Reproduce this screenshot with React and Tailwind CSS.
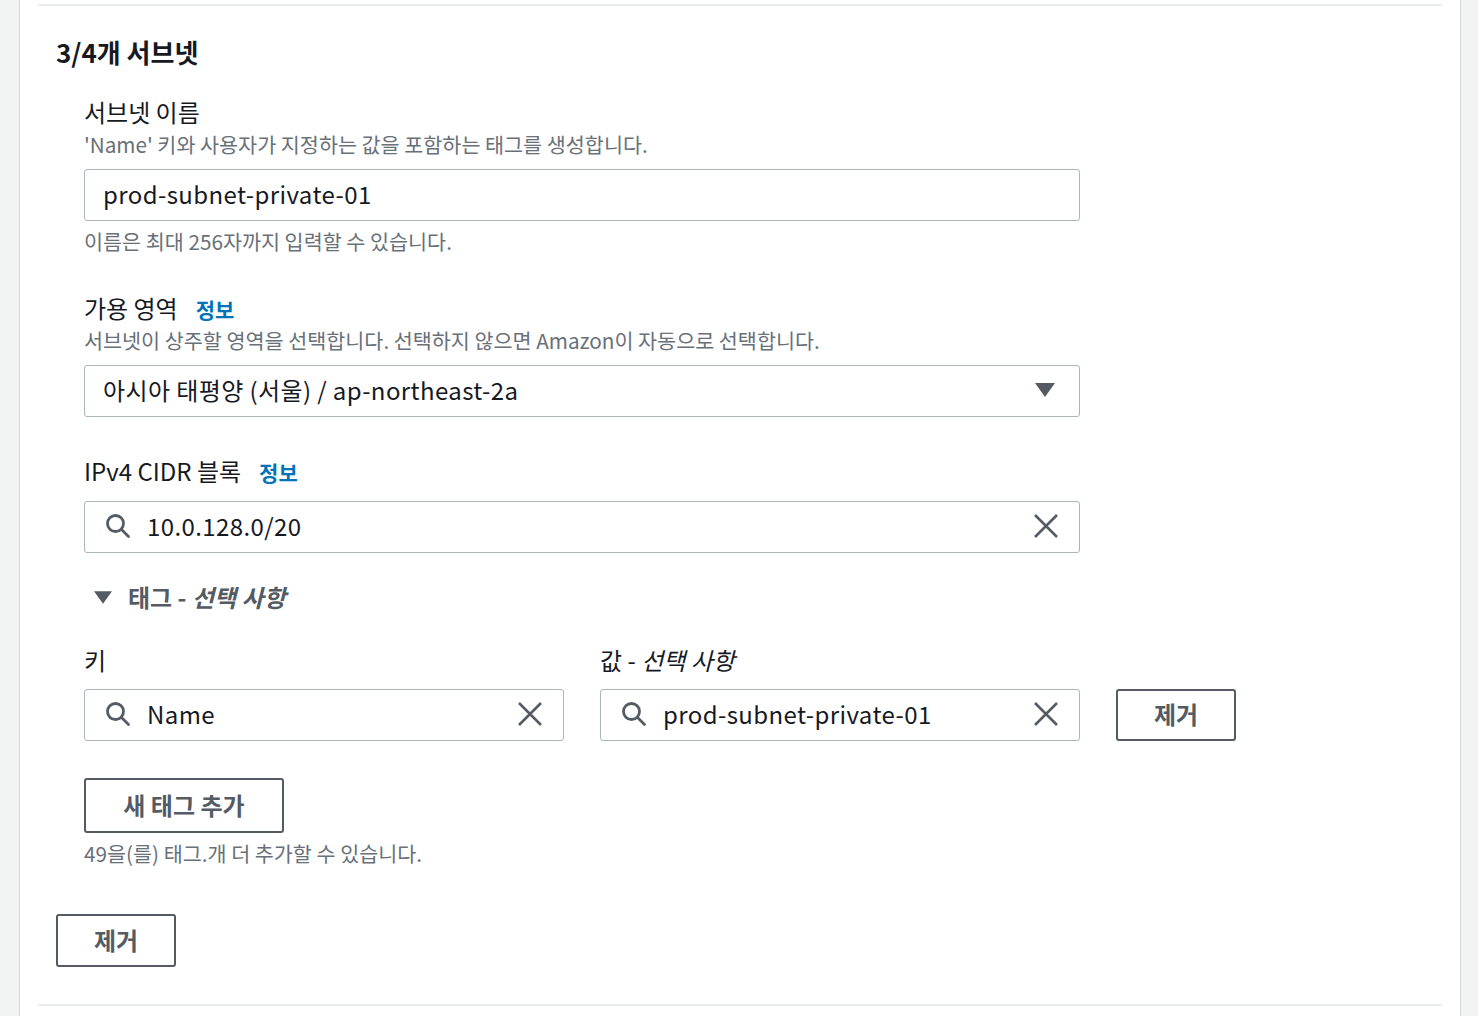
import React from 'react'

const SearchIcon = () => (
  <svg width="26" height="26" viewBox="0 0 26 26" fill="none" className="shrink-0">
    <circle cx="10.5" cy="10.5" r="8" stroke="#545b64" strokeWidth="2.8" />
    <path d="M16.5 16.5 L23.5 23.5" stroke="#545b64" strokeWidth="2.8" strokeLinecap="round" />
  </svg>
)

const ClearIcon = () => (
  <svg width="26" height="26" viewBox="0 0 26 26" fill="none" className="shrink-0">
    <path d="M2 2 L24 24 M24 2 L2 24" stroke="#545b64" strokeWidth="2.6" />
  </svg>
)

const Caret = ({ w = 20, h = 14 }) => (
  <svg width={w} height={h} viewBox="0 0 20 14" className="shrink-0">
    <path d="M0 0 H20 L10 14 Z" fill="#545b64" />
  </svg>
)

const Info = () => (
  <span className="ml-[18px] text-[21px] font-bold text-[#0073bb]">정보</span>
)

const SearchInput = ({ value, className = '' }) => (
  <div
    className={`flex h-[52px] items-center rounded-[3px] border border-[#aab7b8] bg-white pb-[2px] pl-[20px] pr-[20px] ${className}`}
  >
    <SearchIcon />
    <span className="ml-[16px] flex-1 text-[24px] tracking-[0.4px] text-[#16191f]">{value}</span>
    <ClearIcon />
  </div>
)

const Button = ({ children, className = '' }) => (
  <button
    className={`flex items-center justify-center rounded-[3px] border-2 border-[#545b64] bg-white pb-[2px] text-[24px] font-bold text-[#545b64] ${className}`}
  >
    {children}
  </button>
)

export default function App() {
  return (
    <div className="min-h-screen bg-[#f2f3f3] pl-[19px] font-['Noto_Sans_CJK_KR',sans-serif]">
      <div className="h-[1016px] w-[1442px] overflow-hidden border-x border-[#d5dbdb] bg-white px-[18px]">
        <div className="mt-[4px] border-t-2 border-[#eaeded]" />

        <section className="pl-[18px]">
          <h2 className="mt-[30px] text-[26px] font-bold leading-[32px] text-[#16191f]">3/4개 서브넷</h2>

          <div className="pl-[28px]">
            {/* 서브넷 이름 */}
            <div className="mt-[28px] text-[24px] leading-[32px] text-[#16191f]">서브넷 이름</div>
            <div className="text-[20.7px] leading-[32px] text-[#687078]">
              'Name' 키와 사용자가 지정하는 값을 포함하는 태그를 생성합니다.
            </div>
            <div className="mt-[9px] flex h-[52px] w-[996px] items-center rounded-[3px] border border-[#aab7b8] px-[18px] pb-[2px] text-[24px] tracking-[0.4px] text-[#16191f]">
              prod-subnet-private-01
            </div>
            <div className="mt-[4px] text-[20.7px] leading-[32px] text-[#687078]">
              이름은 최대 256자까지 입력할 수 있습니다.
            </div>

            {/* 가용 영역 */}
            <div className="mt-[35px] h-[32px] text-[24px] leading-[32px] text-[#16191f]">
              가용 영역
              <Info />
            </div>
            <div className="text-[20.7px] leading-[32px] text-[#687078]">
              서브넷이 상주할 영역을 선택합니다. 선택하지 않으면 Amazon이 자동으로 선택합니다.
            </div>
            <div className="mt-[9px] flex h-[52px] w-[996px] items-center justify-between rounded-[3px] border border-[#aab7b8] pb-[2px] pl-[18px] pr-[24px] text-[24px] tracking-[0.4px] text-[#16191f]">
              <span>아시아 태평양 (서울) / ap-northeast-2a</span>
              <Caret />
            </div>

            {/* IPv4 CIDR */}
            <div className="mt-[38px] h-[32px] text-[24px] leading-[32px] text-[#16191f]">
              IPv4 CIDR 블록
              <Info />
            </div>
            <SearchInput value="10.0.128.0/20" className="mt-[14px] w-[996px]" />

            {/* 태그 */}
            <div className="mt-[28px] flex h-[32px] items-center pl-[10px] text-[24px] font-bold leading-[32px] text-[#545b64]">
              <Caret w={18} h={13} />
              <span className="ml-[16px]">
                태그 - <em className="italic">선택 사항</em>
              </span>
            </div>

            <div className="mt-[31px] flex gap-[36px]">
              <div className="w-[480px]">
                <div className="text-[24px] leading-[32px] text-[#16191f]">키</div>
                <SearchInput value="Name" className="mt-[13px]" />
              </div>
              <div className="w-[480px]">
                <div className="text-[24px] leading-[32px] text-[#16191f]">
                  값 - <em className="italic">선택 사항</em>
                </div>
                <SearchInput value="prod-subnet-private-01" className="mt-[13px]" />
              </div>
              <div className="flex items-end">
                <Button className="h-[52px] w-[120px]">제거</Button>
              </div>
            </div>

            <Button className="mt-[37px] h-[55px] w-[200px]">새 태그 추가</Button>
            <div className="mt-[4px] text-[20.7px] leading-[32px] text-[#687078]">
              49을(를) 태그.개 더 추가할 수 있습니다.
            </div>
          </div>

          <Button className="mt-[45px] h-[53px] w-[120px]">제거</Button>
        </section>

        <div className="mt-[37px] border-t-2 border-[#eaeded]" />
      </div>
    </div>
  )
}
